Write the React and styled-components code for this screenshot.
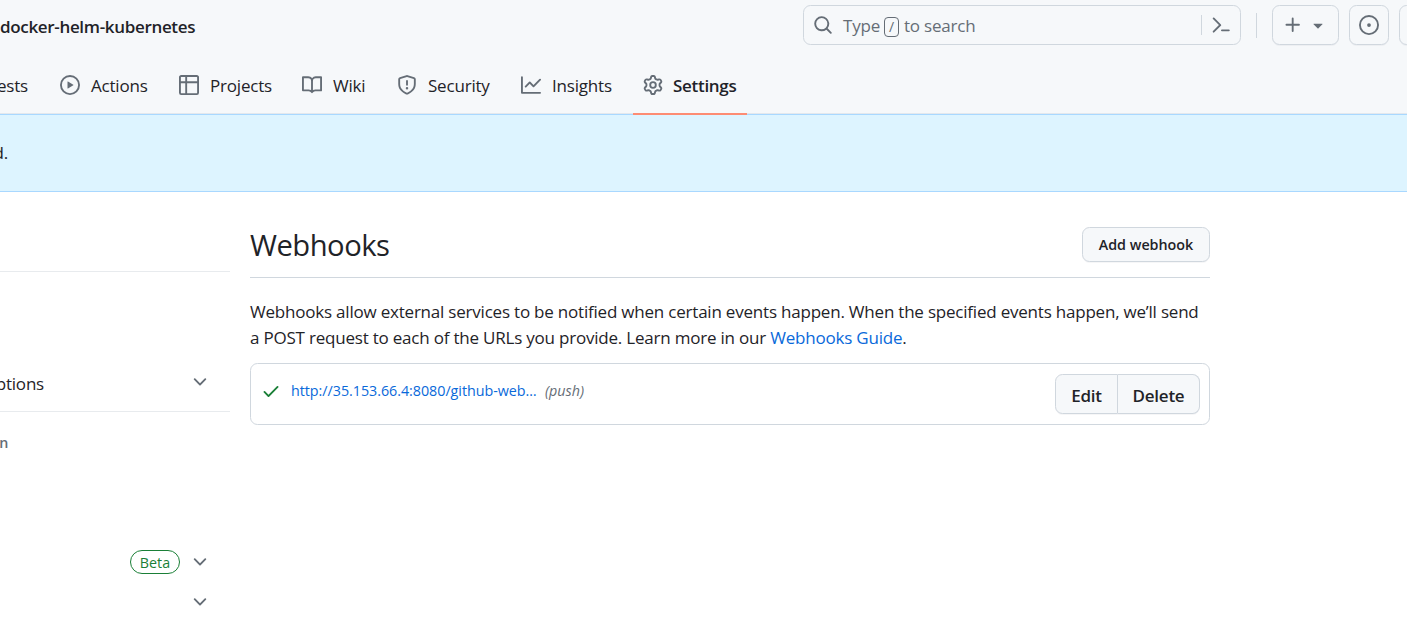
import React from "react";
import styled, { createGlobalStyle } from "styled-components";

const color = {
  text: "#1f2328",
  muted: "#656d76",
  border: "#d0d7de",
  subtle: "#f6f8fa",
  link: "#0969da",
  green: "#1a7f37",
};

const GlobalStyle = createGlobalStyle`
  *, *::before, *::after { box-sizing: border-box; }
  html, body { margin: 0; background: #fff; overflow: hidden; }
  body {
    font-family: "Segoe UI", "Open Sans", "Noto Sans", sans-serif;
    font-size: 17px;
    font-weight: 400;
    letter-spacing: -0.21px;
    line-height: 26px;
    color: ${color.text};
  }
  button { font: inherit; color: inherit; }
  a { color: ${color.link}; text-decoration: none; }
`;

const icons = {
  play: "M8 0a8 8 0 1 1 0 16A8 8 0 0 1 8 0ZM1.5 8a6.5 6.5 0 1 0 13 0 6.5 6.5 0 0 0-13 0Zm4.879-2.773 4.264 2.559a.25.25 0 0 1 0 .428l-4.264 2.559A.25.25 0 0 1 6 10.559V5.442a.25.25 0 0 1 .379-.215Z",
  table: "M0 1.75C0 .784.784 0 1.75 0h12.5C15.216 0 16 .784 16 1.75v12.5A1.75 1.75 0 0 1 14.25 16H1.75A1.75 1.75 0 0 1 0 14.25ZM6.5 6.5v8h7.75a.25.25 0 0 0 .25-.25V6.5Zm8-1.5V1.75a.25.25 0 0 0-.25-.25H6.5V5Zm-13 1.5v7.75c0 .138.112.25.25.25H5v-8ZM5 5V1.5H1.75a.25.25 0 0 0-.25.25V5Z",
  book: "M0 1.75A.75.75 0 0 1 .75 1h4.253c1.227 0 2.317.59 3 1.501A3.743 3.743 0 0 1 11.006 1h4.245a.75.75 0 0 1 .75.75v10.5a.75.75 0 0 1-.75.75h-4.507a2.25 2.25 0 0 0-1.591.659l-.622.621a.75.75 0 0 1-1.06 0l-.622-.621A2.25 2.25 0 0 0 5.258 13H.75a.75.75 0 0 1-.75-.75Zm7.251 10.324.004-5.073-.002-2.253A2.25 2.25 0 0 0 5.003 2.5H1.5v9h3.757a3.75 3.75 0 0 1 1.994.574ZM8.755 4.75l-.004 7.322a3.752 3.752 0 0 1 1.992-.572H14.5v-9h-3.495a2.25 2.25 0 0 0-2.25 2.25Z",
  shield: "M7.467.133a1.748 1.748 0 0 1 1.066 0l5.25 1.68A1.75 1.75 0 0 1 15 3.48V7c0 1.566-.32 3.182-1.303 4.682-.983 1.498-2.585 2.813-5.032 3.855a1.697 1.697 0 0 1-1.33 0c-2.447-1.042-4.049-2.357-5.032-3.855C1.32 10.182 1 8.566 1 7V3.48a1.755 1.755 0 0 1 1.217-1.667Zm.61 1.429a.25.25 0 0 0-.153 0l-5.25 1.68a.25.25 0 0 0-.174.238V7c0 1.358.275 2.666 1.057 3.86.784 1.194 2.121 2.34 4.366 3.297a.196.196 0 0 0 .154 0c2.245-.956 3.582-2.104 4.366-3.298C13.225 9.666 13.5 8.36 13.5 7V3.48a.251.251 0 0 0-.174-.237l-5.25-1.68ZM8.75 4.75v3a.75.75 0 0 1-1.5 0v-3a.75.75 0 0 1 1.5 0ZM9 10.5a1 1 0 1 1-2 0 1 1 0 0 1 2 0Z",
  graph: "M1.5 1.75V13.5h13.75a.75.75 0 0 1 0 1.5H.75a.75.75 0 0 1-.75-.75V1.75a.75.75 0 0 1 1.5 0Zm14.28 2.53-5.25 5.25a.75.75 0 0 1-1.06 0L7 7.06 4.28 9.78a.751.751 0 0 1-1.042-.018.751.751 0 0 1-.018-1.042l3.25-3.25a.75.75 0 0 1 1.06 0L10 7.94l4.72-4.72a.751.751 0 0 1 1.042.018.751.751 0 0 1 .018 1.042Z",
  gear: "M8 0a8.2 8.2 0 0 1 .701.031C9.444.095 9.99.645 10.16 1.29l.288 1.107c.018.066.079.158.212.224.231.114.454.243.668.386.123.082.233.09.299.071l1.103-.303c.644-.176 1.392.021 1.82.63.27.385.506.792.704 1.218.315.675.111 1.422-.364 1.891l-.814.806c-.049.048-.098.147-.088.294.016.257.016.515 0 .772-.01.147.038.246.088.294l.814.806c.475.469.679 1.216.364 1.891a7.977 7.977 0 0 1-.704 1.217c-.428.61-1.176.807-1.82.63l-1.102-.302c-.067-.019-.177-.011-.3.071a5.909 5.909 0 0 1-.668.386c-.133.066-.194.158-.211.224l-.29 1.106c-.168.646-.715 1.196-1.458 1.26a8.006 8.006 0 0 1-1.402 0c-.743-.064-1.289-.614-1.458-1.26l-.289-1.106c-.018-.066-.079-.158-.212-.224a5.738 5.738 0 0 1-.668-.386c-.123-.082-.233-.09-.299-.071l-1.103.303c-.644.176-1.392-.021-1.82-.63a8.12 8.12 0 0 1-.704-1.218c-.315-.675-.111-1.422.363-1.891l.815-.806c.05-.048.098-.147.088-.294a6.214 6.214 0 0 1 0-.772c.01-.147-.038-.246-.088-.294l-.815-.806C.635 6.045.431 5.298.746 4.623a7.92 7.92 0 0 1 .704-1.217c.428-.61 1.176-.807 1.82-.63l1.102.302c.067.019.177.011.3-.071.214-.143.437-.272.668-.386.133-.066.194-.158.211-.224l.29-1.106C6.009.645 6.556.095 7.299.03 7.53.01 7.764 0 8 0Zm-.571 1.525c-.036.003-.108.036-.137.146l-.289 1.105c-.147.561-.549.967-.998 1.189-.173.086-.34.183-.5.29-.417.278-.97.423-1.529.27l-1.103-.303c-.109-.03-.175.016-.195.045-.22.312-.412.644-.573.99-.014.031-.021.11.059.19l.815.806c.411.406.562.957.53 1.456a4.709 4.709 0 0 0 0 .582c.032.499-.119 1.05-.53 1.456l-.815.806c-.081.08-.073.159-.059.19.162.346.353.677.573.989.02.03.085.076.195.046l1.102-.303c.56-.153 1.113-.008 1.53.27.161.107.328.204.501.29.447.222.85.629.997 1.189l.289 1.105c.029.109.101.143.137.146a6.6 6.6 0 0 0 1.142 0c.036-.003.108-.036.137-.146l.289-1.105c.147-.561.549-.967.998-1.189.173-.086.34-.183.5-.29.417-.278.97-.423 1.529-.27l1.103.303c.109.029.175-.016.195-.045.22-.313.411-.644.573-.99.014-.031.021-.11-.059-.19l-.815-.806c-.411-.406-.562-.957-.53-1.456a4.709 4.709 0 0 0 0-.582c-.032-.499.119-1.05.53-1.456l.815-.806c.081-.08.073-.159.059-.19a6.464 6.464 0 0 0-.573-.989c-.02-.03-.085-.076-.195-.046l-1.102.303c-.56.153-1.113.008-1.53-.27a4.44 4.44 0 0 0-.501-.29c-.447-.222-.85-.629-.997-1.189l-.289-1.105c-.029-.11-.101-.143-.137-.146a6.6 6.6 0 0 0-1.142 0ZM11 8a3 3 0 1 1-6 0 3 3 0 0 1 6 0ZM9.5 8a1.5 1.5 0 1 0-3.001.001A1.5 1.5 0 0 0 9.5 8Z",
  search: "M10.68 11.74a6 6 0 0 1-7.922-8.982 6 6 0 0 1 8.982 7.922l3.04 3.04a.749.749 0 0 1-.326 1.275.749.749 0 0 1-.734-.215ZM11.5 7a4.499 4.499 0 1 0-8.997 0A4.499 4.499 0 0 0 11.5 7Z",
  palette: "m6.354 8.04-4.773 4.773a.75.75 0 1 0 1.061 1.06L7.945 8.57a.75.75 0 0 0 0-1.06L2.642 2.206a.75.75 0 0 0-1.06 1.061L6.353 8.04ZM8.75 11.5a.75.75 0 0 0 0 1.5h5.5a.75.75 0 0 0 0-1.5h-5.5Z",
  plus: "M7.75 2a.75.75 0 0 1 .75.75V7h4.25a.75.75 0 0 1 0 1.5H8.5v4.25a.75.75 0 0 1-1.5 0V8.5H2.75a.75.75 0 0 1 0-1.5H7V2.75A.75.75 0 0 1 7.75 2Z",
  triangle: "m4.427 7.427 3.396 3.396a.25.25 0 0 0 .354 0l3.396-3.396A.25.25 0 0 0 11.396 7H4.604a.25.25 0 0 0-.177.427Z",
  issue: "M8 9.5a1.5 1.5 0 1 0 0-3 1.5 1.5 0 0 0 0 3ZM8 0a8 8 0 1 1 0 16A8 8 0 0 1 8 0ZM1.5 8a6.5 6.5 0 1 0 13 0 6.5 6.5 0 0 0-13 0Z",
  check: "M13.78 4.22a.75.75 0 0 1 0 1.06l-7.25 7.25a.75.75 0 0 1-1.06 0L2.22 9.28a.751.751 0 0 1 .018-1.042.751.751 0 0 1 1.042-.018L6 10.94l6.72-6.72a.75.75 0 0 1 1.06 0Z",
  chevron: "M12.78 5.22a.749.749 0 0 1 0 1.06l-4.25 4.25a.749.749 0 0 1-1.06 0L3.22 6.28a.749.749 0 1 1 1.06-1.06L8 8.939l3.72-3.719a.749.749 0 0 1 1.06 0Z",
};

const Svg = styled.svg`
  display: block;
  flex: none;
  width: 20px;
  height: 20px;
  fill: ${(p) => p.$fill || color.muted};
`;

const Icon = ({ name, fill }) => (
  <Svg viewBox="0 0 16 16" $fill={fill} aria-hidden="true">
    <path d={icons[name]} />
  </Svg>
);

const Page = styled.div`
  width: 1407px;
  height: 620px;
  overflow: hidden;
`;

const Header = styled.header`
  height: 114px;
  background: ${color.subtle};
  border-bottom: 1px solid #e3e8ed;
`;

const TopBar = styled.div`
  display: flex;
  align-items: flex-start;
  height: 56px;
  padding-top: 5px;

  & > * {
    flex: none;
  }
`;

const RepoName = styled.strong`
  width: 803px;
  line-height: 43px;
  font-weight: 600;
  letter-spacing: ${(p) => p.$track}px;
  white-space: nowrap;
`;

const SearchBox = styled.div`
  display: flex;
  align-items: center;
  width: 438px;
  height: 40px;
  padding: 0 9px;
  border: 1px solid ${color.border};
  border-radius: 7.5px;
  color: ${color.muted};
`;

const SearchHint = styled.span`
  display: flex;
  align-items: center;
  flex: 1;
  margin-left: 10px;
  white-space: nowrap;
`;

const HintWord = styled.span`
  width: ${(p) => p.$width}px;
  padding-top: 1px;
`;

const Key = styled.kbd`
  width: 15px;
  height: 20px;
  margin: 3px 5px 0 0;
  border: 1px solid ${color.muted};
  border-radius: 4px;
  font: 14px/18px "Open Sans", sans-serif;
  text-align: center;
`;

const PaletteButton = styled.span`
  display: flex;
  height: 20px;
  padding-left: 9px;
  border-left: 1px solid ${color.border};
`;

const Divider = styled.span`
  width: 1px;
  height: 25px;
  margin: 8px 15px 0;
  background: ${color.border};
`;

const HeaderButton = styled.button`
  display: flex;
  align-items: center;
  gap: 5px;
  width: ${(p) => p.$width}px;
  height: 40px;
  margin-right: 10px;
  padding: 0 9px 0 ${(p) => p.$inset || 9}px;
  border: 1px solid ${color.border};
  border-radius: 7.5px;
  background: ${color.subtle};
  box-shadow: 0 1px 0 rgba(31, 35, 40, 0.04);
`;

const Tabs = styled.nav`
  display: flex;
  gap: 10px;
  height: 59px;
`;

const Tab = styled.a`
  display: flex;
  flex: none;
  align-items: center;
  justify-content: ${(p) => (p.$clipped ? "flex-end" : "flex-start")};
  gap: ${(p) => (p.$active ? 10 : 11)}px;
  width: ${(p) => p.$width}px;
  padding: 0 ${(p) => (p.$clipped ? 12 : 10)}px 0 10px;
  color: ${color.text};
  font-weight: ${(p) => (p.$active ? 600 : "inherit")};
  letter-spacing: ${(p) => (p.$active ? -0.3 : -0.2)}px;
  border-bottom: 2px solid ${(p) => (p.$active ? "#fd8c73" : "transparent")};
  white-space: nowrap;
`;

const TabLabel = styled.span`
  padding-top: 2px;
`;

const Flash = styled.div`
  display: flex;
  align-items: center;
  height: 78px;
  border: solid #a9d8ff;
  border-width: 1px 0;
  background: #ddf4ff;
`;

const FlashText = styled.span`
  display: flex;
  justify-content: flex-end;
  width: 8px;
  overflow: hidden;
`;

const Columns = styled.main`
  display: flex;
  gap: 20px;
`;

const Sidebar = styled.aside`
  width: 230px;
  height: 428px;
  overflow: hidden;
`;

const ProfileBlock = styled.div`
  height: 80px;
  border-bottom: 1px solid #e8ebee;
`;

const MenuGroup = styled.div`
  height: 140px;
  padding-top: 90px;
  border-bottom: 1px solid #e8ebee;
`;

const MenuRow = styled.div`
  display: flex;
  align-items: center;
  justify-content: space-between;
  height: 40px;
  padding-right: 20px;
`;

const MenuEnd = styled.div`
  display: flex;
  align-items: center;
  gap: 10px;
  margin-left: auto;
`;

const MenuLabel = styled.span`
  display: flex;
  justify-content: flex-end;
  width: 44px;
  margin-top: 3px;
`;

const GroupTitle = styled.div`
  display: flex;
  justify-content: flex-end;
  width: 8px;
  height: 112px;
  margin-top: 18px;
  color: ${color.muted};
  font-size: 14.3px;
  font-weight: 600;
`;

const Beta = styled.span`
  width: 50px;
  height: 24px;
  border: 1px solid ${color.green};
  border-radius: 12px;
  color: ${color.green};
  font-size: 14.3px;
  font-weight: 500;
  letter-spacing: 0;
  line-height: 23px;
  text-align: center;
`;

const Content = styled.section`
  width: 960px;
  padding-top: 35px;
`;

const Subhead = styled.div`
  display: flex;
  justify-content: space-between;
  height: 51px;
  border-bottom: 1px solid ${color.border};
`;

const Title = styled.h1`
  margin: 0;
  font-size: 29.2px;
  font-weight: inherit;
  line-height: 36px;
  letter-spacing: ${(p) => p.$track}px;
`;

const Button = styled.button`
  width: ${(p) => p.$width}px;
  height: ${(p) => p.$height}px;
  padding: ${(p) => p.$drop || 0}px 0 0;
  border: 1px solid ${color.border};
  border-radius: ${(p) => p.$radius || "7.5px"};
  background: ${color.subtle};
  box-shadow: 0 1px 0 rgba(31, 35, 40, 0.04);
  font-size: ${(p) => p.$size}px;
  font-weight: 600;
  letter-spacing: ${(p) => p.$track || 0}px;

  & + & {
    border-left: 0;
  }
`;

const Intro = styled.p`
  margin: 21px 0 12px;
`;

const IntroLine = styled.span`
  display: block;
  white-space: nowrap;
  letter-spacing: ${(p) => p.$track}px;
`;

const HookCard = styled.div`
  display: flex;
  align-items: flex-start;
  height: 62px;
  padding: 10px 9px 0 10px;
  border: 1px solid ${color.border};
  border-radius: 7.5px;
`;

const HookInfo = styled.div`
  display: flex;
  flex: 1;
  align-items: center;
  height: 34px;
  font-size: 14.3px;
  white-space: nowrap;
`;

const HookUrl = styled.a`
  width: 254px;
  margin-left: 10px;
  letter-spacing: ${(p) => p.$track}px;
`;

const HookEvent = styled.em`
  color: ${color.muted};
  letter-spacing: ${(p) => p.$track}px;
`;

const ButtonGroup = styled.div`
  display: flex;
`;

const tabs = [
  { icon: "play", label: "Actions", width: 109 },
  { icon: "table", label: "Projects", width: 113 },
  { icon: "book", label: "Wiki", width: 85 },
  { icon: "shield", label: "Security", width: 114 },
  { icon: "graph", label: "Insights", width: 112 },
  { icon: "gear", label: "Settings", width: 114, active: true },
];

export default function App() {
  return (
    <Page>
      <GlobalStyle />
      <Header>
        <TopBar>
          <RepoName $track={-0.33}>docker-helm-kubernetes</RepoName>
          <SearchBox>
            <Icon name="search" />
            <SearchHint>
              <HintWord $width={41}>Type</HintWord>
              <Key>/</Key>
              <HintWord $width={80}>to search</HintWord>
            </SearchHint>
            <PaletteButton>
              <Icon name="palette" />
            </PaletteButton>
          </SearchBox>
          <Divider />
          <HeaderButton $width={67} $inset={10}>
            <Icon name="plus" />
            <Icon name="triangle" />
          </HeaderButton>
          <HeaderButton $width={40}>
            <Icon name="issue" />
          </HeaderButton>
          <HeaderButton $width={40} />
        </TopBar>
        <Tabs>
          <Tab $width={40} $clipped>
            <TabLabel>ests</TabLabel>
          </Tab>
          {tabs.map((t) => (
            <Tab key={t.label} $width={t.width} $active={t.active}>
              <Icon name={t.icon} />
              <TabLabel>{t.label}</TabLabel>
            </Tab>
          ))}
        </Tabs>
      </Header>
      <Flash>
        <FlashText>d.</FlashText>
      </Flash>
      <Columns>
        <Sidebar>
          <ProfileBlock />
          <MenuGroup>
            <MenuRow>
              <MenuLabel>ptions</MenuLabel>
              <Icon name="chevron" />
            </MenuRow>
          </MenuGroup>
          <GroupTitle>n</GroupTitle>
          <MenuRow>
            <MenuEnd>
              <Beta>Beta</Beta>
              <Icon name="chevron" />
            </MenuEnd>
          </MenuRow>
          <MenuRow>
            <MenuEnd>
              <Icon name="chevron" />
            </MenuEnd>
          </MenuRow>
        </Sidebar>
        <Content>
          <Subhead>
            <Title $track={-0.5}>Webhooks</Title>
            <Button $width={128} $height={35} $size={14.3}>Add webhook</Button>
          </Subhead>
          <Intro>
            <IntroLine $track={-0.21}>
              Webhooks allow external services to be notified when certain events happen. When the specified events happen, we’ll send
            </IntroLine>
            <IntroLine $track={-0.21}>
              a POST request to each of the URLs you provide. Learn more in our <a href="#guide">Webhooks Guide</a>.
            </IntroLine>
          </Intro>
          <HookCard>
            <HookInfo>
              <Icon name="check" fill={color.green} />
              <HookUrl href="#hook" $track={-0.03}>http://35.153.66.4:8080/github-web…</HookUrl>
              <HookEvent $track={0}>(push)</HookEvent>
            </HookInfo>
            <ButtonGroup>
              <Button $width={63} $height={40} $size={17} $track={-0.25} $drop={3} $radius="7.5px 0 0 7.5px">Edit</Button>
              <Button $width={82} $height={40} $size={17} $track={-0.25} $drop={3} $radius="0 7.5px 7.5px 0">Delete</Button>
            </ButtonGroup>
          </HookCard>
        </Content>
      </Columns>
    </Page>
  );
}
